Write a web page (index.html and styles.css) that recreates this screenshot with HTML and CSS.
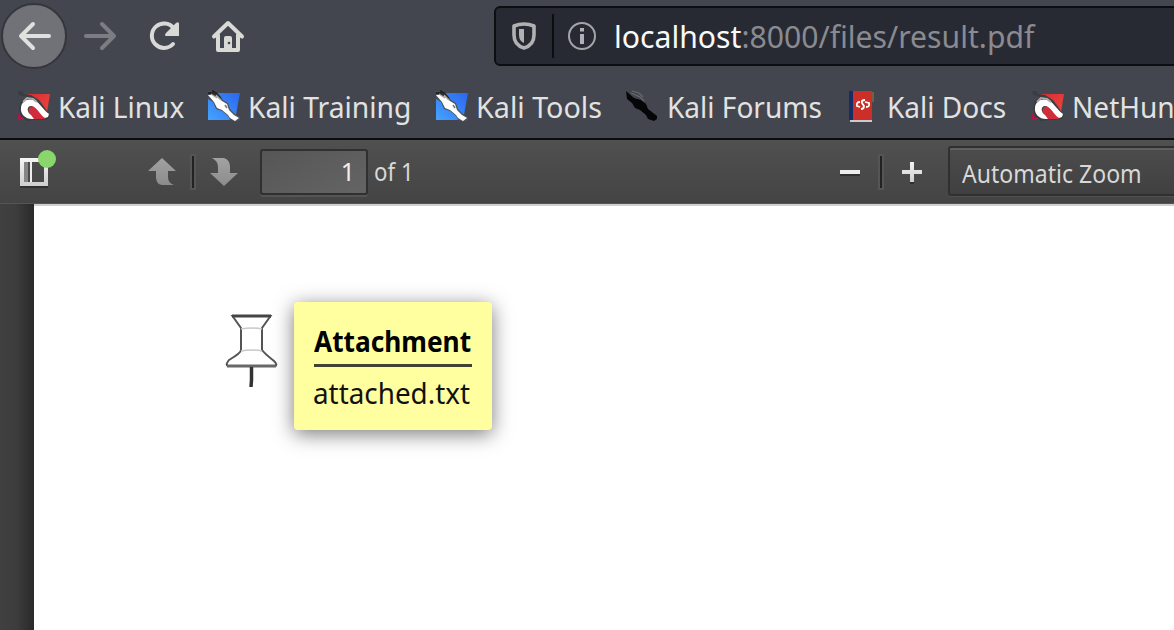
FILE: index.html
```
<!DOCTYPE html>
<html lang="en">
<head>
<meta charset="utf-8">
<title>result.pdf</title>
<link rel="stylesheet" href="styles.css">
</head>
<body>
<svg class="defs" width="0" height="0">
  <defs>
    <linearGradient id="red" x2="1" y2="1"><stop stop-color="#d42b31"/><stop offset="1" stop-color="#f04a40"/></linearGradient>
    <linearGradient id="blue" x1="0" y1="1" x2="1" y2="0"><stop stop-color="#45a3ff"/><stop offset="1" stop-color="#2c66ed"/></linearGradient>
    <linearGradient id="light" x2="0" y2="1"><stop stop-color="#f3f3f3"/><stop offset="1" stop-color="#d0d0d0"/></linearGradient>
    <linearGradient id="dim" x2="0" y2="1"><stop stop-color="#a2a2a2"/><stop offset="1" stop-color="#8c8c8c"/></linearGradient>
    <symbol id="dragon" viewBox="0 0 32 32">
      <path d="M9 4H32L29 22 24 29H4V12Z" fill="url(#red)"/>
      <path d="M0 1H4L6 4 13 5 21 10 27 18 32 26 30 29 24 30 17 30 9 31 3 27 1 18 3 11 8 7 1 5Z" fill="#393d43"/>
      <path d="M0 23 6 30H0Z" fill="#ad1646"/>
      <path d="M11 18Q15 14 20 19L27 29H16Q9 23 11 18Z" fill="#d02c3b"/>
      <path d="M16 29C8 30 2 24 3 18C3 11 10 8 15 10C21 11 25 20 31 24L30 27 27 28C22 25 19 17 14 16C9 15 8 21 13 25Z" fill="#fff"/>
      <path d="M5 12 9 8 15 9 19 12" fill="none" stroke="#aaaaac" stroke-width="2"/>
    </symbol>
    <symbol id="knife" viewBox="0 0 32 32">
      <path d="M0 3H32L27 30H0Z" fill="url(#blue)"/>
      <path d="M0 1H8L11 5 15 10 20 13 22 19 27 24 32 27V30L28 32 22 30 20 26 14 21 8 19 5 12 0 9Z" fill="#4b525c"/>
      <path d="M0 5 7 5 14 11 19 14 21 20 26 25 31 28 27 31 22 28 20 25 14 20 9 18 6 12Z" fill="#fff"/>
      <path d="M0 3 3 3 8 6M4 1 8 3 13 9" fill="none" stroke="#222" stroke-width="2"/>
      <path d="M3 4 9 8M8 5 13 10" fill="none" stroke="#aaa69e" stroke-width="1.500"/>
      <path d="M17 15 19 18" stroke="#777" stroke-width="1.500"/>
    </symbol>
  </defs>
</svg>
<div class="browser">
  <header class="nav">
    <div class="back"><svg width="34" height="30" viewBox="0 0 34 30"><path d="M32 15H4M16 3 4 15 16 27" fill="none" stroke="#e0e0df" stroke-width="4" stroke-linejoin="round" stroke-linecap="round"/></svg></div>
    <svg class="forward" width="34" height="30" viewBox="0 0 34 30"><path d="M2 15H30M18 3 30 15 18 27" fill="none" stroke="#7c7d82" stroke-width="4" stroke-linejoin="round" stroke-linecap="round"/></svg>
    <svg class="reload" width="32" height="32" viewBox="0 0 32 32"><path d="M25 24A12.200 12.200 0 1 1 25.500 8" fill="none" stroke="#d9d9d6" stroke-width="4" stroke-linecap="round"/><path d="M28 3Q31 1 31 4V16H18Q16 16 18 13Z" fill="#d9d9d6"/></svg>
    <svg class="home" width="34" height="34" viewBox="0 0 34 34"><path d="M3 17.500 17 4 31 17.500M7 16V31H27V16" fill="none" stroke="#d9d9d6" stroke-width="4" stroke-linejoin="round" stroke-linecap="round"/><path d="M13 32V19Q13 17 15 17H19Q21 17 21 19V32Z" fill="#d9d9d6"/><circle cx="18" cy="24" r="1.300" fill="#42454d"/></svg>
    <div class="url">
      <svg class="shield" width="26" height="30" viewBox="0 0 26 30"><path d="M3 5Q13 1 23 5V14Q23 24 13 27Q3 24 3 14Z" fill="none" stroke="#b1b1b3" stroke-width="3.600" stroke-linejoin="round"/><path d="M13 8V22Q8 20 8 14V8Z" fill="#b1b1b3"/></svg>
      <i class="divider"></i>
      <svg class="info" width="30" height="30" viewBox="0 0 30 30"><circle cx="15" cy="15" r="13" fill="none" stroke="#a4a5a9" stroke-width="2"/><path d="M15 13V23M15 7V10.500" stroke="#b1b1b3" stroke-width="4"/></svg>
      <span class="address">localhost<span class="path">:8000/files/result.pdf</span></span>
    </div>
  </header>
  <nav class="bookmarks">
    <a class="b1"><svg width="32" height="32"><use href="#dragon"/></svg><span>Kali Linux</span></a>
    <a class="b2"><svg width="32" height="32"><use href="#knife"/></svg><span>Kali Training</span></a>
    <a class="b3"><svg width="32" height="32"><use href="#knife"/></svg><span>Kali Tools</span></a>
    <a class="b4"><svg width="32" height="32" viewBox="0 0 32 32"><path d="M0 1 8 8 15 10 20 14 22 19 31 26V29L28 31 22 29 20 25 14 20 9 18 6 13 1 9Z" fill="#050607"/><path d="M5 3 14 7 18 11M6 1 13 3 17 7" fill="none" stroke="#666a70" stroke-width="1.300"/></svg><span>Kali Forums</span></a>
    <a class="b5"><svg width="30" height="34" viewBox="0 0 30 34"><path d="M3 2H25V33H3Z" fill="#cfc8cc"/><path d="M2 2H8V31H2Z" fill="#172d66"/><path d="M6 2H25V31H6Z" fill="#cb2f28"/><path d="M26 3V13" stroke="#6c6544" stroke-width="2"/><path d="M18 11Q14 11 15 14L17 17Q17 20 14 20M13 13Q9 13 10 17L13 18M18 13 22 14Q23 18 19 18" fill="none" stroke="#fff" stroke-width="1.800"/></svg><span>Kali Docs</span></a>
    <a class="b6"><svg width="32" height="32"><use href="#dragon"/></svg><span>NetHunter</span></a>
  </nav>
  <div class="toolbar">
    <svg class="sidebar" width="40" height="44" viewBox="0 0 40 44"><path d="M2 38H30V40H2Z" fill="#303030"/><path d="M4 12H28V36H4Z" fill="none" stroke="url(#light)" stroke-width="4"/><path d="M6 14H10V34H6Z" fill="#858585"/><path d="M13 14V34" stroke="#eee" stroke-width="2"/><circle cx="29" cy="11" r="9" fill="#88d66c"/></svg>
    <svg class="up" width="28" height="30" viewBox="0 0 28 30"><path d="M14 1 28 14H20V20Q20 26 26 28H14Q8 27 8 20V14H0Z" fill="url(#dim)"/></svg>
    <i class="sep s1"></i>
    <svg class="down" width="28" height="30" viewBox="0 0 28 30"><path d="M14 29 28 16H20V10Q20 3 14 1H2Q8 4 8 10V16H0Z" fill="url(#dim)"/></svg>
    <div class="page-number"><span>1</span></div>
    <span class="count">of 1</span>
    <i class="minus"></i>
    <i class="sep s2"></i>
    <svg class="plus" width="20" height="24" viewBox="0 0 20 24"><path d="M0 12H8V22H12V12H20V14H12V24H8V14H0Z" fill="#303030"/><path d="M8 2H12V10H20V14H12V22H8V14H0V10H8Z" fill="url(#light)"/></svg>
    <div class="zoom"><span>Automatic Zoom</span></div>
  </div>
  <main class="viewer">
    <article class="page">
      <svg class="pin" width="56" height="78" viewBox="0 0 56 78"><g fill="none" stroke="#555" stroke-width="2"><path d="M8.500 4H46.500L38 16V38Q40 41 50 49Q54 53 51 54H4Q1 53 5 48Q17 41 17 38V16Z"/><path d="M8 4H47" stroke-width="2.800" stroke="#444"/><path d="M17 17Q27 15 38 17M17 39Q27 37 38 39" stroke="#c9c9c9" stroke-width="1.500"/><path d="M3 54H52" stroke="#686868" stroke-width="3"/><path d="M27.500 55V68L27 75" stroke="#333" stroke-width="3.500"/></g></svg>
      <section class="popup"><h1><span>Attachment</span></h1><p><span>attached.txt</span></p></section>
    </article>
  </main>
</div>
</body>
</html>
```
FILE: styles.css
```
* { box-sizing: border-box; }
body { margin: 0; font-family: "Noto Sans", sans-serif; background: #404040; }
.defs { display: block; height: 0; }
.browser { width: 1174px; height: 630px; overflow: hidden; display: flex; flex-direction: column; }
svg { flex: none; display: block; }
.nav { height: 74px; flex: none; display: flex; align-items: center; background: #43464e; }
.back { width: 66px; height: 66px; flex: none; margin: -2px 0 0 1px; border: 2px solid #35363b; border-radius: 50%; background: #717277; display: flex; align-items: center; justify-content: center; }
.forward { margin-left: 17px; margin-top: -2px; }
.reload { margin-left: 30px; margin-top: -2px; }
.home { margin-left: 31px; margin-top: -2px; }
.url { height: 60px; width: 700px; flex: none; margin-left: 249px; margin-top: -2px; border: 2px solid #0d0e12; border-radius: 6px; background: #282a33; display: flex; align-items: center; }
.shield { margin-left: 15px; }
.divider { width: 2px; height: 44px; background: #0c0d11; margin-left: 15px; flex: none; }
.info { margin-left: 13px; }
.address { margin-left: 17px; margin-top: 2px; font-size: 30px; line-height: 40px; color: #f9f9fa; white-space: nowrap; transform: scaleX(1.005); transform-origin: left; }
.path { color: #898b91; }
.bookmarks { height: 64px; flex: none; display: flex; align-items: center; background: #43464e; color: #e2e2e1; font-size: 29px; }
.bookmarks a { display: flex; align-items: center; flex: none; white-space: nowrap; height: 64px; }
.bookmarks svg { margin-top: -1px; }
.bookmarks span { margin-left: 8px; transform: scaleX(.967); transform-origin: left; }
.b1 { width: 190px; margin-left: 18px; }
.b2 { width: 228px; }
.b2 span { transform: scaleX(.974); }
.b3 { width: 190px; }
.b3 span { transform: scaleX(.99); }
.b4 { width: 222px; }
.b4 span { margin-left: 9px; }
.b5 { width: 184px; }
.b6 { width: 180px; }
.b5 svg { margin-left: -1px; }
.b5 span { margin-left: 10px; }
.toolbar { height: 66px; flex: none; border-top: 2px solid #0c0c0f; border-bottom: 1px solid #555; background: linear-gradient(#505050, #444); display: flex; align-items: center; color: #d8d8d8; font-size: 25px; }
.sidebar { margin-left: 18px; margin-top: -4px; }
.up { margin-left: 90px; }
.down { margin-left: 14px; }
.sep { width: 6px; height: 36px; flex: none; border: 2px solid #555; background: #222; }
.s1 { margin-left: 14px; }
.page-number { width: 108px; height: 46px; flex: none; margin-left: 22px; border: 2px solid #303030; border-radius: 3px; background: linear-gradient(150deg, #565656, #646464); display: flex; justify-content: flex-end; align-items: center; padding-right: 11px; padding-bottom: 2px; box-shadow: 0 2px #555; color: #eee; }
.page-number span { font-size: 25px; }
.count { margin-left: 6px; margin-top: -2px; width: 40px; white-space: nowrap; transform: scaleX(.89); transform-origin: left; }
.minus { width: 20px; height: 4px; margin-left: 426px; background: #ededed; box-shadow: 0 2px #303030; flex: none; }
.s2 { margin-left: 18px; }
.plus { margin-left: 18px; }
.zoom { width: 260px; height: 50px; flex: none; margin: -1px 0 0 26px; border: 2px solid #303030; border-radius: 3px; background: linear-gradient(#4c4c4c, #404040); box-shadow: inset 0 2px #606060, 0 1px #505050; display: flex; align-items: center; padding-left: 12px; padding-top: 3px; }
.zoom span { white-space: nowrap; transform: scaleX(.922); transform-origin: left; }
.viewer { flex: 1; padding-left: 34px; background: linear-gradient(90deg, #404040 0, #3d3d3d 16px, #292929 34px); }
.page { height: 100%; background: #fff; border-top: 2px solid #d0d0d0; padding: 96px 0 0 190px; display: flex; align-items: flex-start; }
.pin { margin-top: 10px; }
.popup { width: 198px; height: 128px; margin-left: 14px; border-radius: 4px; background: #ffff9f; box-shadow: 0 4px 20px rgba(0,0,0,.53); padding: 19px 20px 0; color: #111; font-size: 29px; }
.popup h1 { margin: 0; height: 46px; line-height: 40px; font-size: 28px; color: #000; border-bottom: 3px solid #424233; white-space: nowrap; }
.popup h1 span { display: inline-block; transform: scaleX(.938); transform-origin: left; }
.popup p { margin: 0; line-height: 52px; white-space: nowrap; }
.popup p span { display: inline-block; transform: translateX(-1px) scaleX(.96); transform-origin: left; }
```
